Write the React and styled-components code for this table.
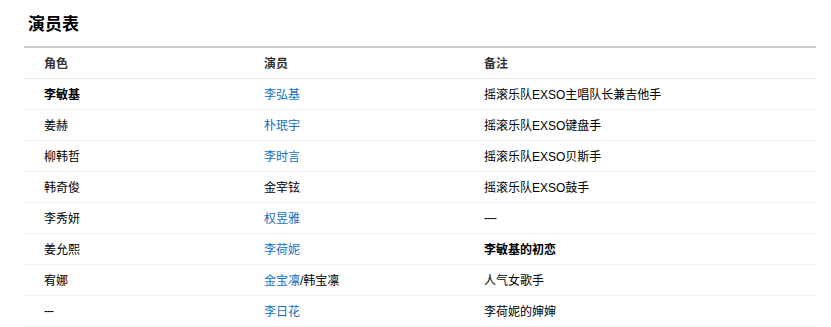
import React from 'react'
import styled, { createGlobalStyle } from 'styled-components'

const GlobalStyle = createGlobalStyle`
  body {
    margin: 0;
    background: #fff;
    font-family: "Liberation Sans", Arial, "Noto Sans CJK SC", sans-serif;
    color: #000;
  }
`

const rows = [
  { role: '李敏基', roleBold: true, actor: [{ text: '李弘基', link: true }], note: '摇滚乐队EXSO主唱队长兼吉他手' },
  { role: '姜赫', actor: [{ text: '朴珉宇', link: true }], note: '摇滚乐队EXSO键盘手' },
  { role: '柳韩哲', actor: [{ text: '李时言', link: true }], note: '摇滚乐队EXSO贝斯手' },
  { role: '韩奇俊', actor: [{ text: '金宰铉' }], note: '摇滚乐队EXSO鼓手' },
  { role: '李秀妍', actor: [{ text: '权昱雅', link: true }], note: '----', dash: true },
  { role: '姜允熙', actor: [{ text: '李荷妮', link: true }], note: '李敏基的初恋', noteBold: true },
  { role: '宥娜', actor: [{ text: '金宝凛', link: true }, { text: '/韩宝凛' }], note: '人气女歌手' },
  { role: '---', roleDash: true, actor: [{ text: '李日花', link: true }], note: '李荷妮的婶婶' }
]

export default function App() {
  return (
    <Page>
      <GlobalStyle />
      <Title>演员表</Title>
      <Table>
        <thead>
          <HeadRow>
            <Th>角色</Th>
            <Th>演员</Th>
            <Th $wide>备注</Th>
          </HeadRow>
        </thead>
        <tbody>
          {rows.map((r, i) => (
            <Row key={i}>
              <Td $bold={r.roleBold}>{r.roleDash ? <Dash>{r.role}</Dash> : r.role}</Td>
              <Td>
                {r.actor.map((a, j) =>
                  a.link ? <Link key={j}>{a.text}</Link> : <span key={j}>{a.text}</span>
                )}
              </Td>
              <Td $bold={r.noteBold}>{r.dash ? <Dash>{r.note}</Dash> : r.note}</Td>
            </Row>
          ))}
        </tbody>
      </Table>
    </Page>
  )
}

const Page = styled.div`
  padding: 14px 15px 0 24px;
`

const Title = styled.h2`
  margin: 0 0 11px 4px;
  font-size: 17px;
  line-height: 21px;
  font-weight: bold;
  color: #000;
`

const Table = styled.table`
  width: 792px;
  table-layout: fixed;
  border-collapse: collapse;
  border-top: 2px solid #cccccc;
  font-size: 12px;
`

const HeadRow = styled.tr`
  height: 31px;
  border-bottom: 1px solid #e6e6e6;
`

const Th = styled.th`
  box-sizing: border-box;
  width: ${p => (p.$wide ? 'auto' : '220px')};
  padding: 0 0 0 20px;
  text-align: left;
  font-weight: bold;
  color: #333;
`

const Row = styled.tr`
  height: 31px;
  border-bottom: 1px solid #efefef;
`

const Td = styled.td`
  padding: 0 0 0 20px;
  font-weight: ${p => (p.$bold ? 'bold' : 'normal')};
  color: #000;
  white-space: nowrap;
`

const Dash = styled.span`
  letter-spacing: -1px;
`

const Link = styled.a`
  color: #136ec2;
  text-decoration: none;
  cursor: pointer;
`
